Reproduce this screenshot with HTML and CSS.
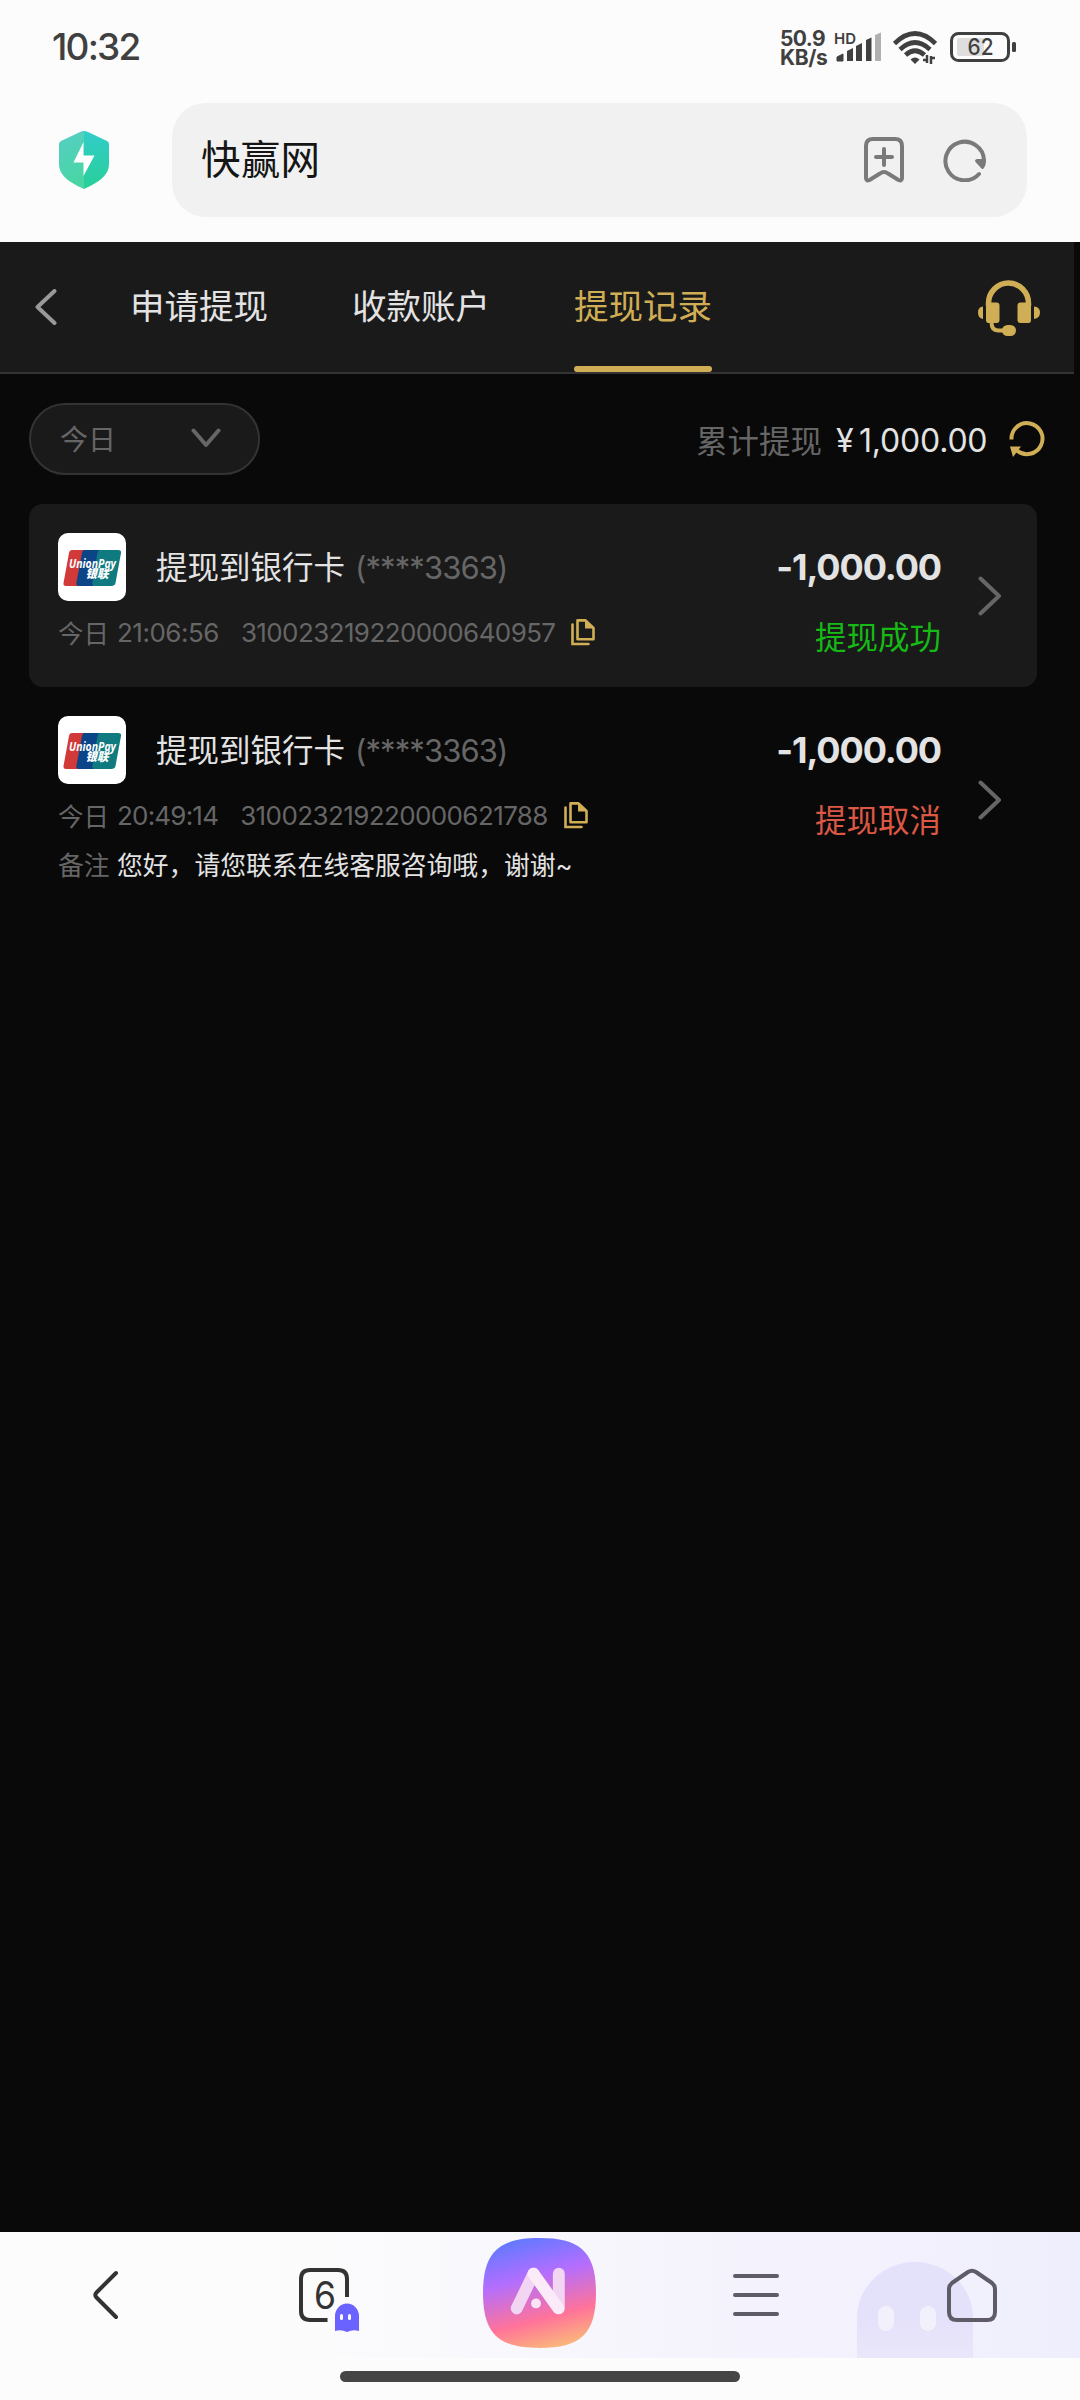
FILE: index.html
```html
<!DOCTYPE html>
<html lang="zh-CN">
<head>
<meta charset="utf-8">
<title>快赢网</title>
<link rel="stylesheet" href="styles.css">
</head>
<body>
<svg class="defs" width="0" height="0" aria-hidden="true">
  <defs>
    <symbol id="copy" viewBox="0 0 24 27">
      <path d="M1.500 5.500V25H17.500" fill="none" stroke="currentColor" stroke-width="2.600" stroke-linecap="round"/>
      <path d="M6.500 1.400H14.500L22.500 9V20.300H6.500Z" fill="none" stroke="currentColor" stroke-width="2.600" stroke-linejoin="round"/>
      <path d="M14 1V9.500H23Z" fill="currentColor"/>
    </symbol>
    <symbol id="chevron" viewBox="0 0 24 40">
      <path d="M2.500 2.500L21 20L2.500 37.500" fill="none" stroke="currentColor" stroke-width="4" stroke-linecap="round" stroke-linejoin="round"/>
    </symbol>
    <symbol id="unionpay" viewBox="0 0 68 68">
      <path d="M14 17H27L21 53H8Q5 53 5.500 50L11 20Q11.500 17 14 17Z" fill="#d23a3a"/>
      <path d="M26 17H42L36 53H21Q17.500 53 18.500 49L24 20Q24.500 17 26 17Z" fill="#0b4587"/>
      <path d="M42 17H60Q63.500 17 63 20L57.500 50Q57 53 53 53H37Q33.500 53 34.500 49L39.500 20Q40 17 42 17Z" fill="#0f7b80"/>
      <text x="11" y="34.500" class="up-latin" textLength="47" lengthAdjust="spacingAndGlyphs">UnionPay</text>
      <text x="27.500" y="45" class="up-cn" textLength="23" lengthAdjust="spacingAndGlyphs">银联</text>
    </symbol>
  </defs>
</svg>

<header class="status">
  <span class="clock">10:32</span>
  <div class="indicators">
    <div class="speed"><span>50.9</span><span class="unit">KB/s</span></div>
    <svg class="signal" width="48" height="36" viewBox="0 0 48 36">
      <text x="0" y="15.500" class="hd" textLength="22" lengthAdjust="spacingAndGlyphs">HD</text>
      <g fill="#404040">
        <path d="M3 29L9 26V33H3Z" stroke="#404040" stroke-linejoin="round"/>
        <path d="M13 23L19 20V33H13Z"/><path d="M22 18L28 15V33H22Z"/><path d="M32 12L37.500 9.500V33H32Z"/>
      </g>
      <path d="M41 7L47 4.500V33H41Z" fill="#b0b0b0"/>
    </svg>
    <svg class="wifi" width="44" height="36" viewBox="0 0 44 36">
      <g fill="none" stroke="#404040" stroke-width="4.600">
        <path d="M1.500 13.500Q22 -6.500 42.500 13.500"/><path d="M7 19.500Q22 5.500 37 19.500"/><path d="M12.500 25Q22 16.500 31.500 25"/>
      </g>
      <path d="M17.500 29.500Q22 25.500 26.500 29.500L22 34Z" fill="#404040"/>
      <path d="M30 30H34V25M34 33V26M38 26V34M38 28H42" fill="none" stroke="#404040" stroke-width="2.500"/>
    </svg>
    <svg class="battery" width="68" height="30" viewBox="0 0 68 30">
      <rect x="1.500" y="1.500" width="57" height="27" rx="7" fill="none" stroke="#404040" stroke-width="3"/>
      <path d="M9 6H34V24H9Q7 24 7 22V8Q7 6 9 6Z" fill="#dedede"/>
      <rect x="62" y="10" width="4" height="10" rx="1.500" fill="#404040"/>
      <text x="17.500" y="23" class="pct" textLength="26" lengthAdjust="spacingAndGlyphs">62</text>
    </svg>
  </div>
</header>

<div class="address">
  <svg class="shield" width="52" height="60" viewBox="0 0 52 60">
    <defs><linearGradient id="sg" x1="0" y1="0" x2="0.300" y2="1"><stop offset="0" stop-color="#56cfc6"/><stop offset="1" stop-color="#49d5a4"/></linearGradient>
    <linearGradient id="sr" x1="0" y1="0" x2="0" y2="1"><stop offset="0" stop-color="#32cdc9"/><stop offset="1" stop-color="#28cf98"/></linearGradient></defs>
    <path d="M26 1Q24 1 22 2L3 11Q1 12 1 14V34C1 47 15 54 26 59Z" fill="url(#sg)"/>
    <path d="M26 1Q28 1 30 2L49 11Q51 12 51 14V34C51 47 37 54 26 59Z" fill="url(#sr)"/>
    <path d="M25.500 12L15.500 32.500H25.500V46L36.500 25.500H25.500Z" fill="#fff"/>
  </svg>
  <div class="searchbar">
    <span class="site">快赢网</span>
    <svg width="42" height="48" viewBox="0 0 42 48" class="grayline">
      <path d="M3 10Q3 3 10 3H32Q39 3 39 10V42Q39 45.500 35.500 44L25 37.500Q21 34.500 17 37.500L6.500 44Q3 45.500 3 42Z"/>
      <path d="M21 13V29M13 21H29"/>
    </svg>
    <svg width="44" height="44" viewBox="0 0 44 44" class="grayline refresh">
      <path d="M36 36A19.300 19.300 0 1 1 41 22"/>
      <path d="M32 22.500Q32.500 21 34 21H43V23Q43 27 41 30Q39.500 32 38 30L32.500 24Z" class="solid"/>
    </svg>
  </div>
</div>

<main class="app">
  <nav class="topnav">
    <svg class="back" width="24" height="36" viewBox="0 0 24 36"><path d="M20.500 2L3.500 18L20.500 34"/></svg>
    <div class="tabs">
      <a class="tab">申请提现</a>
      <a class="tab">收款账户</a>
      <a class="tab active">提现记录</a>
    </div>
    <svg class="service" width="62" height="56" viewBox="0 0 62 56">
      <path d="M10.500 26V23.500A20 20.500 0 0 1 50.500 23.500V26" fill="none" stroke="#d0ae55" stroke-width="5.500"/>
      <path d="M8 24.500H12V22.500H18.500Q21.500 22.500 21.500 25.500V40Q21.500 43 18.500 43H10.500Q8 43 8 40ZM53 24.500H50V22.500H42.500Q39.500 22.500 39.500 25.500V40Q39.500 43 42.500 43H50.500Q53 43 53 40Z" fill="#d0ae55"/>
      <path d="M5 26.500V39Q0 38 0 32.500T5 26.500ZM56 26.500V39Q62 38 62 32.500T56 26.500Z" fill="#d0ae55"/>
      <path d="M13.500 42Q13.500 50.500 20 50.500H28" fill="none" stroke="#d0ae55" stroke-width="4"/>
      <rect x="24" y="45" width="14" height="11" rx="5.500" fill="#d0ae55"/>
    </svg>
  </nav>

  <section class="filter">
    <button class="pill">今日<svg width="30" height="20" viewBox="0 0 30 20"><path d="M2.500 2.500L15 17L27.500 2.500"/></svg></button>
    <div class="total">
      <span class="label">累计提现</span>
      <span class="sum"><span class="yen">¥</span>1,000.00</span>
      <svg width="36" height="36" viewBox="0 0 36 36"><path d="M2.500 18.500A15.500 15.500 0 1 1 8 29.500" fill="none" stroke="#d0ae55" stroke-width="4"/><path d="M1 25.500H12L4 36Z" fill="#d0ae55"/></svg>
    </div>
  </section>

  <section class="records">
    <article class="record shaded">
      <div class="info">
        <div class="head"><svg class="bank"><use href="#unionpay"/></svg><span class="title">提现到银行卡</span><span class="card-no">(****3363)</span></div>
        <div class="meta"><span class="day">今日</span><span class="time">21:06:56</span><span class="order">310023219220000640957</span><svg class="copy"><use href="#copy"/></svg></div>
      </div>
      <div class="result"><span class="amount">-1,000.00</span><span class="state ok">提现成功</span></div>
      <svg class="more"><use href="#chevron"/></svg>
    </article>
    <article class="record">
      <div class="info">
        <div class="head"><svg class="bank"><use href="#unionpay"/></svg><span class="title">提现到银行卡</span><span class="card-no">(****3363)</span></div>
        <div class="meta"><span class="day">今日</span><span class="time tight">20:49:14</span><span class="order">310023219220000621788</span><svg class="copy"><use href="#copy"/></svg></div>
        <div class="note"><span class="note-label">备注</span>您好，请您联系在线客服咨询哦，谢谢~</div>
      </div>
      <div class="result"><span class="amount">-1,000.00</span><span class="state cancel">提现取消</span></div>
      <svg class="more"><use href="#chevron"/></svg>
    </article>
  </section>
</main>

<footer class="browser">
  <div class="toolbar">
    <svg class="ghost" width="116" height="96" viewBox="0 0 116 96">
      <defs><linearGradient id="gg" x1="0" y1="0" x2="0" y2="1"><stop offset="0.600" stop-color="#e4e1fa"/><stop offset="1" stop-color="#eae7fb"/></linearGradient></defs>
      <path d="M0 96V56A58 56 0 0 1 116 56V96Z" fill="url(#gg)"/>
      <rect x="21" y="44" width="16" height="25" rx="8" fill="#f2f1fb"/><rect x="63" y="44" width="16" height="25" rx="8" fill="#f2f1fb"/>
    </svg>
    <div class="slot prev"><svg width="30" height="52" viewBox="0 0 30 52"><path d="M25 4L5.500 23.500Q3 26 5.500 28.500L25 48"/></svg></div>
    <div class="slot windows">
      <svg width="64" height="68" viewBox="0 0 64 68">
        <path d="M30.500 53H13Q4 53 4 44V12Q4 3 13 3H41Q50 3 50 12V30" class="frame"/>
        <text x="17" y="42" class="count" textLength="22" lengthAdjust="spacingAndGlyphs">6</text>
        <path class="mini" d="M38 64V49A12 12.500 0 0 1 62 49V64Q56 62 50 65Q44 62 38 64Z"/>
        <rect class="eye" x="43" y="47" width="3" height="6" rx="1.500"/><rect class="eye" x="51" y="47" width="3" height="6" rx="1.500"/>
      </svg>
    </div>
    <div class="slot ai">
      <svg width="113" height="110" viewBox="0 0 114 111">
        <defs><linearGradient id="ag" x1="0.350" y1="0" x2="0.620" y2="1"><stop offset="0" stop-color="#6279ff"/><stop offset="0.350" stop-color="#b36eff"/><stop offset="0.730" stop-color="#ff7399"/><stop offset="1" stop-color="#fbb67c"/></linearGradient></defs>
        <path class="fill" d="M57 0C98 0 114 14 114 55.500S98 111 57 111S0 97 0 55.500S16 0 57 0Z" fill="url(#ag)"/>
        <path d="M34 71L51 36" class="letter dim"/>
        <path d="M76.500 36V71" class="letter dim"/>
        <path d="M51 36L76 71" class="letter"/>
        <circle cx="53.500" cy="66" r="5" fill="#f9e3f4" class="fill"/>
      </svg>
    </div>
    <div class="slot soft"><svg width="50" height="46" viewBox="0 0 50 46"><path d="M4 4H46M4 23H46M4 42H46"/></svg></div>
    <div class="slot soft"><svg width="54" height="56" viewBox="0 0 54 56"><path d="M4 22Q4 18.500 7 16L23 5Q27 2.500 31 5L47 16Q50 18.500 50 22V45Q50 53 42 53H12Q4 53 4 45Z"/></svg></div>
  </div>
  <div class="home-bar"></div>
</footer>
</body>
</html>
```

FILE: styles.css
```css
* { box-sizing: border-box; }
body {
  margin: 0;
  width: 1080px;
  height: 2400px;
  display: flex;
  flex-direction: column;
  background: #fcfcfc;
  font-family: Inter, "Noto Sans CJK SC", sans-serif;
  overflow: hidden;
}
svg { display: block; flex: none; }
.defs { position: absolute; }

.status {
  height: 95px;
  padding: 0 62px 0 52px;
  display: flex;
  justify-content: space-between;
  color: #404040;
}
.clock { margin-top: 24px; font-size: 37px; line-height: 46px; font-weight: 500; letter-spacing: -1.8px; }
.indicators { display: flex; align-items: flex-start; }
.speed { display: flex; flex-direction: column; width: 54px; margin-top: 29px; font-size: 21px; font-weight: 700; line-height: 19px; letter-spacing: -0.6px; }
.unit { letter-spacing: -0.4px; }
.signal { margin-top: 28px; }
.hd { font: 600 15px Inter, sans-serif; fill: #404040; }
.wifi { margin: 30px 0 0 11px; }
.battery { margin: 32px 0 0 13px; }
.pct { font: 500 23px Inter, sans-serif; fill: #404040; }

.address { height: 147px; padding: 8px 53px 0 58px; display: flex; align-items: flex-start; }
.shield { margin-top: 27px; }
.searchbar {
  margin-left: 62px;
  flex: 1;
  height: 114px;
  border-radius: 34px;
  background: #f1f1f1;
  padding: 0 40px 0 29px;
  display: flex;
  align-items: center;
}
.site { flex: 1; font-size: 39.500px; letter-spacing: 0.3px; line-height: 60px; color: #151515; }
.grayline { fill: none; stroke: #7a7a7a; stroke-width: 4; stroke-linecap: round; stroke-linejoin: round; }
.refresh { margin-left: 38px; }
.solid { fill: #7a7a7a; stroke: none; }

.app { height: 1990px; background: #090909; color: #e3e3e3; }
.topnav {
  width: 1074px;
  height: 132px;
  padding: 0 34px 0 34px;
  display: flex;
  align-items: flex-start;
  background: #1a1a1a;
  border-bottom: 2px solid #333;
}
.back { margin-top: 47px; fill: none; stroke: #999; stroke-width: 4; stroke-linecap: round; stroke-linejoin: round; }
.tabs { display: flex; gap: 84px; margin-left: 72px; flex: 1; height: 130px; }
.tab { width: 138px; padding-top: 40px; font-size: 34.500px; line-height: 50px; white-space: nowrap; }
.active { position: relative; color: #d0ae55; }
.active::after { content: ""; position: absolute; left: 0; right: 0; bottom: 0; height: 6px; border-radius: 3px; background: #d0ae55; }
.service { margin-top: 38px; }

.filter { height: 130px; padding: 29px 35px 0 29px; display: flex; align-items: flex-start; justify-content: space-between; }
.pill {
  width: 231px;
  height: 72px;
  padding: 0 37px 2px 29px;
  border: 2px solid #333;
  border-radius: 36px;
  background: #1a1a1a;
  color: #666;
  font: 400 28px "Noto Sans CJK SC", sans-serif;
  display: flex;
  align-items: center;
  justify-content: space-between;
}
.pill svg { fill: none; stroke: #666; stroke-width: 4; stroke-linecap: round; stroke-linejoin: round; }
.total { height: 72px; display: flex; align-items: center; }
.label { font-size: 31.500px; color: #666; }
.sum { display: flex; width: 153px; margin: 2px 0 0 14px; font-size: 32px; letter-spacing: -0.2px; white-space: nowrap; }
.yen { width: 23px; }
.total svg { margin-left: 20px; }

.records { padding-left: 29px; width: 1037px; }
.record { min-height: 183px; padding: 28px 35px 0 29px; display: flex; border-radius: 14px; }
.record + .record { height: 225px; }
.shaded { background: #1a1a1a; }
.info { width: 640px; }
.head { display: flex; align-items: center; height: 69px; }
.bank { width: 68px; height: 68px; border-radius: 10px; background: #fff; }
.up-latin { font: italic 700 12px "Open Sans", sans-serif; fill: #fff; }
.up-cn { font: italic 900 12px "Noto Sans CJK SC", sans-serif; fill: #fff; }
.title { margin: 2px 0 0 30px; font-size: 31.500px; line-height: 48px; }
.card-no { margin: 2px 0 0 10px; font-size: 31px; letter-spacing: -0.9px; color: #666; }
.meta { display: flex; align-items: center; height: 62px; margin-bottom: 2px; color: #666; font-size: 26px; white-space: nowrap; }
.day { font-size: 25.500px; width: 59px; margin-top: -1px; }
.time { letter-spacing: -0.5px; margin-right: 22px; }
.tight { letter-spacing: -0.8px; }
.order { letter-spacing: -0.6px; }
.copy { width: 24px; height: 27px; margin-left: 16px; color: #d0ae55; }
.note { font-size: 25.800px; line-height: 35px; white-space: nowrap; }
.note-label { display: inline-block; width: 59px; color: #666; }
.result { flex: 1; display: flex; flex-direction: column; align-items: flex-end; padding-right: 37px; }
.amount { margin-top: 12px; font-size: 36px; line-height: 46px; font-weight: 700; letter-spacing: -1.1px; white-space: nowrap; }
.state { margin-top: 25px; font-size: 31.500px; line-height: 46px; }
.ok { color: #16b916; }
.cancel { color: #dc5844; }
.more { width: 24px; height: 40px; align-self: center; margin-top: -28px; color: #666; }

.browser { height: 168px; }
.toolbar {
  position: relative;
  height: 126px;
  display: grid;
  grid-template-columns: repeat(5, 216px);
  background: linear-gradient(90deg, #fcfcfc 25%, #f4f3fd 70%, #efeefc);
}
.ghost { position: absolute; left: 857px; bottom: 0; }
.slot { position: relative; display: flex; align-items: center; justify-content: center; }
.prev { padding-right: 4px; }
.windows { padding: 12px 0 0 10px; }
.ai { padding: 0 2px 4px 0; }
.slot svg { fill: none; stroke: #333; stroke-width: 4; stroke-linecap: round; stroke-linejoin: round; }
.slot .frame { stroke-linecap: butt; }
.soft svg { stroke: #5f5c68; }
.slot .count { font: 400 38px Inter, sans-serif; fill: #333; stroke: none; }
.slot .mini { fill: #6b63ff; stroke: none; }
.slot .eye { fill: #fff; stroke: none; }
.slot .fill { stroke: none; }
.slot .letter { stroke: #fbeaf8; stroke-width: 12; }
.slot .dim { stroke: #f2d5f3; }
.home-bar { width: 400px; height: 11px; margin: 13px auto 0; border-radius: 6px; background: #454545; }
```
